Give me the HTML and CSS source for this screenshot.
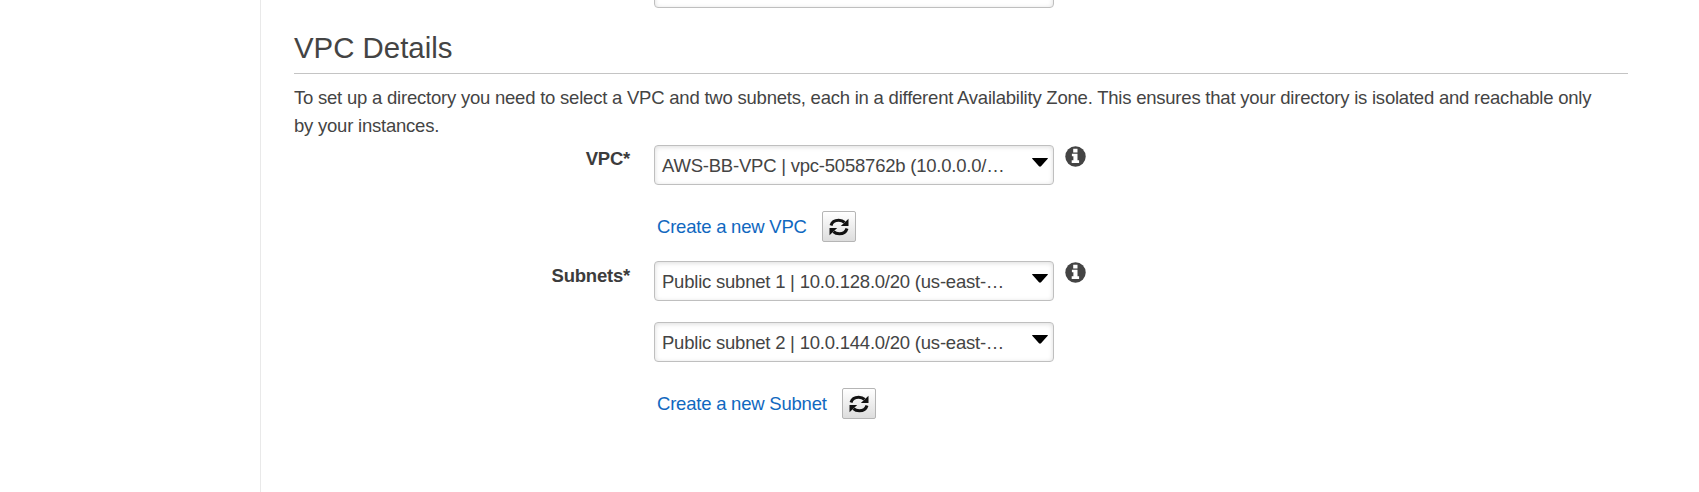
FILE: index.html
```
<!DOCTYPE html>
<html lang="en">
<head>
<meta charset="utf-8">
<title>VPC Details</title>
<link rel="stylesheet" href="styles.css">
</head>
<body>
<svg class="defs" width="0" height="0" aria-hidden="true">
  <symbol id="refresh" viewBox="0 0 20 20">
    <path d="M2 8.500C3 5 6 3.200 9.700 3.200c2.300 0 4.300.7 5.800 2.200" fill="none" stroke="#111" stroke-width="3"/>
    <path d="M19.500 1.800v7.200h-7.700z" fill="#111"/>
    <path d="M18 11.500c-1 3.500-4 5.300-7.700 5.300-2.300 0-4.300-.7-5.800-2.200" fill="none" stroke="#111" stroke-width="3"/>
    <path d="M.5 18.200v-7.200h7.700z" fill="#111"/>
  </symbol>
  <symbol id="info" viewBox="0 0 21 21">
    <circle cx="10.500" cy="10.500" r="10.200" fill="#444"/>
    <path d="M8.200 2.800h4.300v3.600H8.200zM6.900 7.700h5.600v6.600h1.600v2.600H6.700v-2.600h1.700v-4.100H6.900z" fill="#fff"/>
  </symbol>
  <symbol id="caret" viewBox="0 0 16 9"><path d="M.5 0h15q.8.500 0 1L9 8.300q-1 .8-2 0L.5 1q-.8-.5 0-1z" fill="#000"/></symbol>
</svg>
<div class="page">
  <main class="content">
    <div class="select previous"></div>
    <h2 class="title">VPC Details</h2>
    <p class="intro">To set up a directory you need to select a VPC and two subnets, each in a different Availability Zone. This ensures that your directory is isolated and reachable only by your instances.</p>
    <div class="row">
      <label class="label">VPC*</label>
      <div class="fields">
        <div class="select"><span class="value">AWS-BB-VPC | vpc-5058762b (10.0.0.0/…</span><svg class="caret"><use href="#caret"/></svg></div>
        <div class="create"><a class="link">Create a new VPC</a><button class="refresh" aria-label="Refresh"><svg class="refresh-icon"><use href="#refresh"/></svg></button></div>
      </div>
      <svg class="info"><use href="#info"/></svg>
    </div>
    <div class="row subnets">
      <label class="label">Subnets*</label>
      <div class="fields">
        <div class="select"><span class="value">Public subnet 1 | 10.0.128.0/20 (us-east-…</span><svg class="caret"><use href="#caret"/></svg></div>
        <div class="select second"><span class="value">Public subnet 2 | 10.0.144.0/20 (us-east-…</span><svg class="caret"><use href="#caret"/></svg></div>
        <div class="create"><a class="link">Create a new Subnet</a><button class="refresh" aria-label="Refresh"><svg class="refresh-icon"><use href="#refresh"/></svg></button></div>
      </div>
      <svg class="info"><use href="#info"/></svg>
    </div>
  </main>
</div>
</body>
</html>
```
FILE: styles.css
```
* { box-sizing: border-box; }
body {
  margin: 0;
  background: #fff;
  color: #444;
  font: 18.5px/28px "Liberation Sans", Arial, sans-serif;
  letter-spacing: -.22px;
  overflow: hidden;
}
.defs { display: block; }
.page { display: flex; height: 492px; padding-left: 260px; }
.content {
  flex: 1;
  height: 492px;
  padding: 0 71px 0 33px;
  border-left: 1px solid #e9e9e9;
}
.select {
  display: flex;
  align-items: flex-start;
  justify-content: space-between;
  width: 400px;
  height: 40px;
  padding: 6px 5px 0 7px;
  border: 1px solid #bfbfbf;
  border-radius: 4px;
  box-shadow: inset 0 1px 5px rgba(0, 0, 0, .14);
}
.previous { margin: -32px 0 0 360px; }
.title {
  height: 66px;
  margin: 0;
  padding-top: 20px;
  border-bottom: 1px solid #c4c4c4;
  font-size: 29.4px;
  font-weight: 400;
  line-height: 40px;
  letter-spacing: 0;
}
.intro { margin: 10px 0 0; height: 61px; padding-right: 24px; }
.row { display: flex; align-items: flex-start; height: 116px; }
.label {
  width: 336px;
  color: #3c3c3c;
  text-align: right;
  font-weight: 700;
}
.subnets .label { padding-top: 1px; }
.fields { width: 400px; margin-left: 24px; }
.caret { width: 16px; height: 9px; margin-top: 6px; }
.value { white-space: nowrap; }
.create { display: flex; align-items: center; margin-top: 26px; padding-left: 3px; }
.link { color: #1068bf; white-space: nowrap; }
.refresh {
  display: flex;
  align-items: center;
  justify-content: center;
  width: 34px;
  height: 31px;
  margin-left: 15.500px;
  padding: 0;
  border: 1px solid #b5b5b5;
  border-radius: 2px;
  background: linear-gradient(#fff, #ddd);
}
.refresh-icon { width: 20px; height: 20px; }
.info { width: 21px; height: 21px; margin: 1px 0 0 11px; }
.second { margin-top: 21px; }
```
